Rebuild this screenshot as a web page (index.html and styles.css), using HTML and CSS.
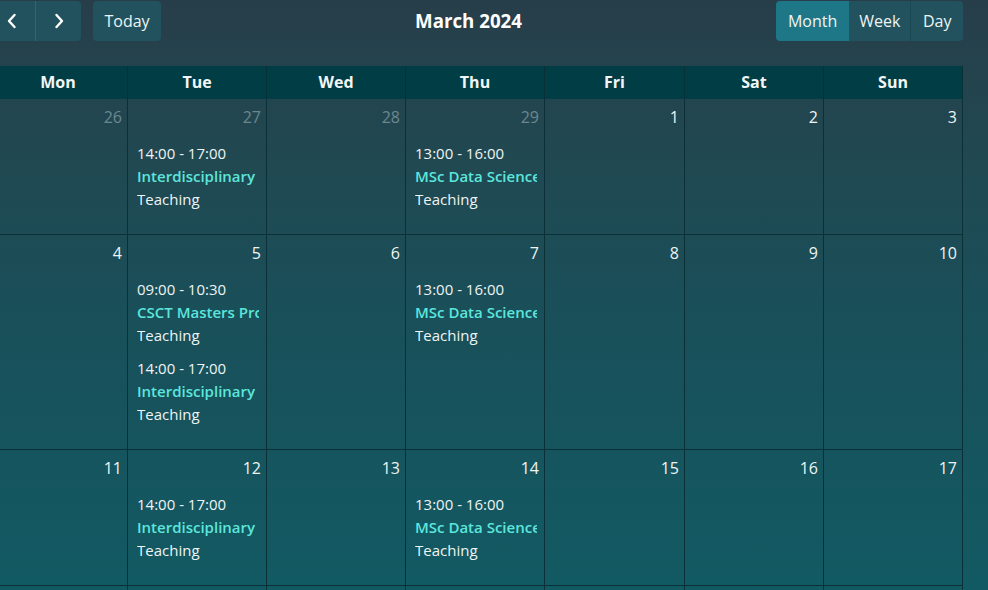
FILE: index.html
```html
<!DOCTYPE html>
<html lang="en">
<head>
<meta charset="utf-8">
<title>Calendar</title>
<link rel="stylesheet" href="styles.css">
</head>
<body>
<div class="wrap">
  <div class="toolbar">
    <div class="group">
      <div class="btn-group">
        <button class="btn icon" aria-label="Previous"><svg width="10" height="16" viewBox="0 0 10 16"><path d="M7.5 2 L2 8 L7.5 14" fill="none" stroke="#fff" stroke-width="2.4" stroke-linecap="round" stroke-linejoin="round"/></svg></button>
        <button class="btn icon" aria-label="Next"><svg width="10" height="16" viewBox="0 0 10 16"><path d="M2.5 2 L8 8 L2.5 14" fill="none" stroke="#fff" stroke-width="2.4" stroke-linecap="round" stroke-linejoin="round"/></svg></button>
      </div>
      <button class="btn single">Today</button>
    </div>
    <h2 class="title">March 2024</h2>
    <div class="btn-group">
      <button class="btn active">Month</button>
      <button class="btn">Week</button>
      <button class="btn">Day</button>
    </div>
  </div>

  <div class="cal">
    <div class="head">Mon</div>
    <div class="head">Tue</div>
    <div class="head">Wed</div>
    <div class="head">Thu</div>
    <div class="head">Fri</div>
    <div class="head">Sat</div>
    <div class="head">Sun</div>

    <div class="cell"><div class="num other">26</div></div>
    <div class="cell"><div class="num other">27</div>
      <div class="events">
        <div class="ev"><div class="t">14:00 - 17:00</div><div class="n">Interdisciplinary</div><div class="k">Teaching</div></div>
      </div>
    </div>
    <div class="cell"><div class="num other">28</div></div>
    <div class="cell"><div class="num other">29</div>
      <div class="events">
        <div class="ev"><div class="t">13:00 - 16:00</div><div class="n">MSc Data Science</div><div class="k">Teaching</div></div>
      </div>
    </div>
    <div class="cell"><div class="num">1</div></div>
    <div class="cell"><div class="num">2</div></div>
    <div class="cell"><div class="num">3</div></div>

    <div class="cell"><div class="num">4</div></div>
    <div class="cell"><div class="num">5</div>
      <div class="events">
        <div class="ev"><div class="t">09:00 - 10:30</div><div class="n">CSCT Masters Project</div><div class="k">Teaching</div></div>
        <div class="ev"><div class="t">14:00 - 17:00</div><div class="n">Interdisciplinary</div><div class="k">Teaching</div></div>
      </div>
    </div>
    <div class="cell"><div class="num">6</div></div>
    <div class="cell"><div class="num">7</div>
      <div class="events">
        <div class="ev"><div class="t">13:00 - 16:00</div><div class="n">MSc Data Science</div><div class="k">Teaching</div></div>
      </div>
    </div>
    <div class="cell"><div class="num">8</div></div>
    <div class="cell"><div class="num">9</div></div>
    <div class="cell"><div class="num">10</div></div>

    <div class="cell"><div class="num">11</div></div>
    <div class="cell"><div class="num">12</div>
      <div class="events">
        <div class="ev"><div class="t">14:00 - 17:00</div><div class="n">Interdisciplinary</div><div class="k">Teaching</div></div>
      </div>
    </div>
    <div class="cell"><div class="num">13</div></div>
    <div class="cell"><div class="num">14</div>
      <div class="events">
        <div class="ev"><div class="t">13:00 - 16:00</div><div class="n">MSc Data Science</div><div class="k">Teaching</div></div>
      </div>
    </div>
    <div class="cell"><div class="num">15</div></div>
    <div class="cell"><div class="num">16</div></div>
    <div class="cell"><div class="num">17</div></div>

    <div class="cell"><div class="num">18</div></div>
    <div class="cell"><div class="num">19</div></div>
    <div class="cell"><div class="num">20</div></div>
    <div class="cell"><div class="num">21</div></div>
    <div class="cell"><div class="num">22</div></div>
    <div class="cell"><div class="num">23</div></div>
    <div class="cell"><div class="num">24</div></div>
  </div>
</div>
</body>
</html>
```

FILE: styles.css
```css
html, body {
  margin: 0;
  padding: 0;
  height: 100%;
  overflow: hidden;
}

body {
  background: linear-gradient(180deg, #273e4a 0%, #214851 25%, #19505a 55%, #125a63 100%);
  font-family: "Open Sans", "Noto Sans", sans-serif;
  color: #eef4f4;
}

.wrap {
  margin-left: -11px;
  width: 974px;
  padding-top: 1px;
}

.toolbar {
  display: flex;
  justify-content: space-between;
  align-items: center;
  height: 40px;
}

.group {
  display: flex;
  gap: 12px;
}

.btn-group {
  display: flex;
  border-radius: 4px;
  overflow: hidden;
}

.btn {
  height: 40px;
  border: 0;
  margin: 0;
  padding: 0 11.5px;
  background: #21525e;
  color: #eef4f4;
  font-family: "Open Sans", "Noto Sans", sans-serif;
  font-size: 16px;
  line-height: 40px;
  display: flex;
  align-items: center;
  justify-content: center;
  border-left: 1px solid #1c4853;
}

.btn:first-child {
  border-left: 0;
}

.btn.icon {
  width: 46px;
  padding: 0;
}

.btn.icon + .btn.icon {
  border-left: 1px solid #2a6a76;
}

.btn.single {
  border-radius: 4px;
  border-left: 0;
}

.btn.active {
  background: #1e7786;
  padding: 0 12px;
}

.btn.active + .btn {
  border-left: 0;
  padding: 0 10px;
}

.title {
  margin: 0;
  font-size: 18.7px;
  font-weight: 700;
  color: #ffffff;
  line-height: 40px;
}

.cal {
  margin-top: 25px;
  display: grid;
  grid-template-columns: 139px 139px 139px 139px 140px 139px 139px;
}

.head {
  background: #013d44;
  height: 33px;
  line-height: 33px;
  text-align: center;
  font-weight: 700;
  font-size: 16px;
  color: #f2f6f6;
  border-right: 1px solid #0a3037;
  box-sizing: border-box;
}

.cell {
  border-right: 1px solid #0c3038;
  border-bottom: 1px solid #0c3038;
  padding-bottom: 23px;
  box-sizing: border-box;
  min-width: 0;
}

.num {
  padding: 6px 5px 0 0;
  text-align: right;
  font-size: 16px;
  line-height: 24px;
  color: #eef4f4;
}

.num.other {
  color: #6b8890;
}

.events {
  margin: 13px 7px 0 9px;
  display: flex;
  flex-direction: column;
  gap: 10px;
  overflow: hidden;
}

.ev {
  font-size: 15px;
  line-height: 23px;
  white-space: nowrap;
  overflow: hidden;
}

.t, .k {
  color: #eef4f4;
}

.n {
  color: #5ce6dc;
  font-weight: 600;
}
```
